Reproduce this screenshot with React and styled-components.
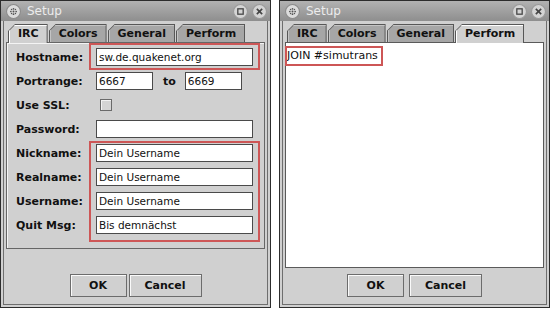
import React from 'react';
import styled, { createGlobalStyle } from 'styled-components';

const GlobalStyle = createGlobalStyle`
  html, body {
    margin: 0;
    padding: 0;
    background: #fff;
  }
  body {
    font-family: "DejaVu Sans", "Liberation Sans", sans-serif;
  }
`;

const Page = styled.div`
  display: flex;
  gap: 8px;
  width: 550px;
  height: 310px;
  background: #fff;
`;

const Window = styled.div`
  width: 271px;
  height: 308px;
  box-sizing: border-box;
  border: 1px solid #2c2c2c;
  background: #d0d0d0;
  box-shadow: inset 0 0 0 2px #d0d0d0, inset 0 0 0 3px #6e6e6e;
  display: flex;
  flex-direction: column;
`;

const TitleBar = styled.div`
  height: 20px;
  flex: none;
  display: flex;
  align-items: center;
  padding: 0 3px 0 5px;
  background: linear-gradient(#b2b2b2, #8e8e8e);
`;

const Title = styled.span`
  margin-left: 6px;
  color: #ececec;
  font-size: 12px;
  flex: 1;
`;

const TitleButtons = styled.div`
  display: flex;
  gap: 4px;
`;

const TabStrip = styled.div`
  display: flex;
  align-items: flex-end;
  gap: 1px;
  height: 21px;
  flex: none;
  padding-left: 7px;
  position: relative;
  z-index: 1;
`;

const Tab = styled.div`
  height: ${(p) => (p.$active ? '19px' : '18px')};
  margin-bottom: ${(p) => (p.$active ? '-1px' : '0')};
  box-sizing: border-box;
  padding: 1px 1px 0 1px;
  background: #575757;
  clip-path: polygon(0 7px, 7px 0, 100% 0, 100% 100%, 0 100%);
`;

const TabFace = styled.div`
  height: 100%;
  box-sizing: border-box;
  display: flex;
  align-items: center;
  padding: 0 8px 1px 9px;
  background: ${(p) => (p.$active ? '#d0d0d0' : '#a6a6a6')};
  box-shadow: inset 1px 1px ${(p) => (p.$active ? '#fff' : '#c4c4c4')};
  clip-path: polygon(0 6px, 6px 0, 100% 0, 100% 100%, 0 100%);
  color: #111;
  font-size: 11px;
  font-weight: bold;
`;

const Body = styled.div`
  flex: 1;
  display: flex;
  flex-direction: column;
  padding: 0 5px;
  min-height: 0;
`;

const Panel = styled.div`
  flex: ${(p) => (p.$fill ? 1 : 'none')};
  display: flex;
  flex-direction: column;
  border: 1px solid #666;
  box-shadow: inset 1px 1px #f4f4f4;
  background: #d0d0d0;
  padding: ${(p) => (p.$fill ? '0' : '5px 9px 14px')};
`;

const Spacer = styled.div`
  flex: 1;
`;

const Form = styled.div`
  display: grid;
  grid-template-columns: 80px 157px;
  grid-template-rows: repeat(8, 18px);
  row-gap: 6px;
`;

const Label = styled.div`
  grid-column: 1;
  grid-row: ${(p) => p.$row};
  display: flex;
  align-items: center;
  font-size: 11px;
  font-weight: bold;
  color: #111;
  white-space: nowrap;
`;

const Cell = styled.div`
  grid-column: 2;
  grid-row: ${(p) => p.$row};
  display: flex;
  align-items: center;
`;

const Field = styled.div`
  width: ${(p) => p.$width || '157px'};
  height: 18px;
  box-sizing: border-box;
  border: 1px solid #4a4a4a;
  background: #fff;
  padding: 0 2px;
  font-size: 10.5px;
  line-height: 16px;
  color: #111;
  white-space: nowrap;
  overflow: hidden;
`;

const To = styled.span`
  font-size: 11px;
  font-weight: bold;
  color: #111;
  margin: 0 9px 0 10px;
`;

const Check = styled.div`
  width: 12px;
  height: 12px;
  box-sizing: border-box;
  margin-left: 4px;
  border: 1px solid #6a6a6a;
  background: #d4d4d4;
  box-shadow: inset 1px 1px #f2f2f2;
`;

const Highlight = styled.div`
  grid-column: 2;
  grid-row: ${(p) => p.$rows};
  margin: ${(p) => p.$margin};
  border: 2px solid #cd5656;
  pointer-events: none;
  z-index: 2;
`;

const TextArea = styled.div`
  flex: 1;
  background: #fff;
  border: 1px solid #5a5a5a;
  margin: -1px;
  padding: 1px 0 0 1px;
`;

const Marked = styled.span`
  display: inline-block;
  font-size: 11px;
  line-height: 16px;
  padding: 0 3px 0 0;
  color: #111;
  outline: 2px solid #cd5656;
  outline-offset: 0;
`;

const Footer = styled.div`
  flex: none;
  display: flex;
  justify-content: center;
  gap: ${(p) => p.$gap || '2px'};
  padding: 6px 0 10px;
`;

const Button = styled.div`
  width: ${(p) => p.$width};
  height: 23px;
  box-sizing: border-box;
  display: flex;
  align-items: center;
  justify-content: center;
  border: 1px solid #6c6c6c;
  box-shadow: inset 1px 1px #fafafa;
  background: #d0d0d0;
  font-size: 11px;
  font-weight: bold;
  color: #111;
`;

function AppIcon() {
  return (
    <svg width="15" height="15" viewBox="0 0 14 14">
      <circle cx="7" cy="7" r="6.5" fill="#dcdcdc" stroke="#8a8a8a" />
      <g fill="#555">
        <circle cx="7" cy="4.5" r="0.8" />
        <circle cx="7" cy="9.5" r="0.8" />
        <circle cx="4.5" cy="7" r="0.8" />
        <circle cx="9.5" cy="7" r="0.8" />
        <circle cx="5.2" cy="5.2" r="0.7" />
        <circle cx="8.8" cy="8.8" r="0.7" />
        <circle cx="8.8" cy="5.2" r="0.7" />
        <circle cx="5.2" cy="8.8" r="0.7" />
        <circle cx="7" cy="7" r="0.9" />
      </g>
    </svg>
  );
}

function MaxIcon() {
  return (
    <svg width="15" height="15" viewBox="0 0 14 14">
      <circle cx="7" cy="7" r="6.5" fill="#d4d4d4" stroke="#9a9a9a" />
      <rect x="4.5" y="4.5" width="5" height="5" fill="none" stroke="#444" strokeWidth="1.2" />
    </svg>
  );
}

function CloseIcon() {
  return (
    <svg width="15" height="15" viewBox="0 0 14 14">
      <circle cx="7" cy="7" r="6.5" fill="#d4d4d4" stroke="#9a9a9a" />
      <path d="M4.5 4.5 L9.5 9.5 M9.5 4.5 L4.5 9.5" stroke="#444" strokeWidth="1.5" />
    </svg>
  );
}

const TABS = ['IRC', 'Colors', 'General', 'Perform'];

function SetupWindow({ active, children, gap }) {
  return (
    <Window>
      <TitleBar>
        <AppIcon />
        <Title>Setup</Title>
        <TitleButtons>
          <MaxIcon />
          <CloseIcon />
        </TitleButtons>
      </TitleBar>
      <TabStrip>
        {TABS.map((t) => (
          <Tab key={t} $active={t === active}>
            <TabFace $active={t === active}>{t}</TabFace>
          </Tab>
        ))}
      </TabStrip>
      <Body>{children}</Body>
      <Footer $gap={gap}>
        <Button $width="57px">OK</Button>
        <Button $width="73px">Cancel</Button>
      </Footer>
    </Window>
  );
}

const FIELDS = [
  ['Nickname:', 'Dein Username'],
  ['Realname:', 'Dein Username'],
  ['Username:', 'Dein Username'],
  ['Quit Msg:', 'Bis demnächst'],
];

export default function App() {
  return (
    <>
      <GlobalStyle />
      <Page>
        <SetupWindow active="IRC">
          <Panel>
            <Form>
              <Label $row={1}>Hostname:</Label>
              <Cell $row={1}>
                <Field>sw.de.quakenet.org</Field>
              </Cell>
              <Highlight $rows="1" $margin="-5px -7px -4px -7px" />

              <Label $row={2}>Portrange:</Label>
              <Cell $row={2}>
                <Field $width="57px">6667</Field>
                <To>to</To>
                <Field $width="57px">6669</Field>
              </Cell>

              <Label $row={3}>Use SSL:</Label>
              <Cell $row={3}>
                <Check />
              </Cell>

              <Label $row={4}>Password:</Label>
              <Cell $row={4}>
                <Field />
              </Cell>

              {FIELDS.map(([label, value], i) => (
                <React.Fragment key={label}>
                  <Label $row={5 + i}>{label}</Label>
                  <Cell $row={5 + i}>
                    <Field>{value}</Field>
                  </Cell>
                </React.Fragment>
              ))}
              <Highlight $rows="5 / span 4" $margin="-3px -7px -8px -7px" />
            </Form>
          </Panel>
          <Spacer />
        </SetupWindow>

        <SetupWindow active="Perform" gap="5px">
          <Panel $fill>
            <TextArea>
              <Marked>JOIN #simutrans</Marked>
            </TextArea>
          </Panel>
        </SetupWindow>
      </Page>
    </>
  );
}
